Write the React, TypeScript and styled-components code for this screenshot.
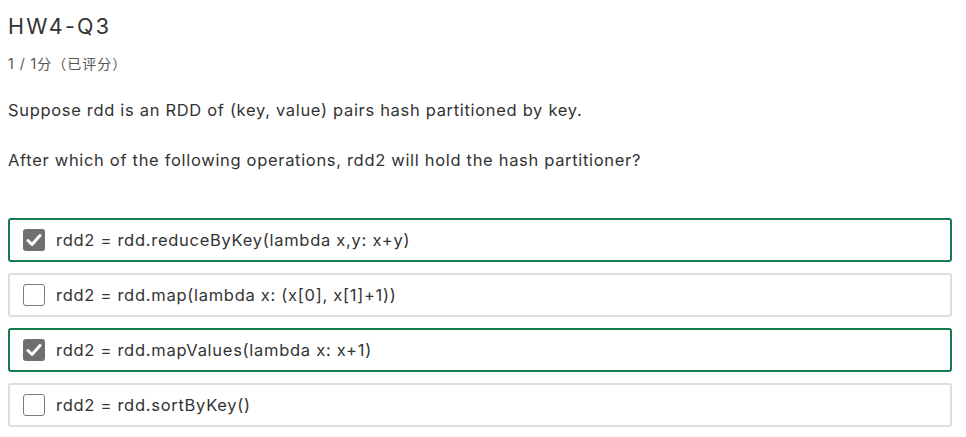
import React from "react";
import styled, { createGlobalStyle } from "styled-components";

const Global = createGlobalStyle`
  html, body { margin: 0; padding: 0; background: #fff; }
  body { font-family: Inter, "Noto Sans CJK SC", sans-serif; color: #333; }
`;

const Page = styled.div`
  padding: 12px 14px 0 8px;
`;

const Title = styled.h1`
  margin: 0;
  font-size: 21.5px;
  font-weight: 400;
  line-height: 28px;
  letter-spacing: 2.2px;
  color: #333;
`;

const Score = styled.div`
  margin-top: 15px;
  font-size: 14px;
  line-height: 18px;
  letter-spacing: 1px;
  color: #555;
`;

const PromptBlock = styled.div`
  margin-top: 25px;
`;

const Prompt = styled.p`
  margin: 0;
  font-size: 16.5px;
  line-height: 24px;
  letter-spacing: 0.68px;
  color: #333;
  & + & { margin-top: 26px; }
`;

const Options = styled.div`
  margin-top: 46px;
  display: flex;
  flex-direction: column;
  gap: 11px;
`;

const Option = styled.label<{ $checked: boolean }>`
  display: flex;
  align-items: center;
  gap: 11px;
  height: 44px;
  box-sizing: border-box;
  padding: 0 13px;
  border: 2px solid ${(p) => (p.$checked ? "#177a4c" : "#dedede")};
  border-radius: 3px;
  font-size: 16.5px;
  letter-spacing: 0.72px;
  color: #333;
`;

const Box = styled.span<{ $checked: boolean }>`
  width: 22px;
  height: 22px;
  box-sizing: border-box;
  border-radius: 3px;
  flex: none;
  display: flex;
  align-items: center;
  justify-content: center;
  background: ${(p) => (p.$checked ? "#6f6f6f" : "#fff")};
  border: ${(p) => (p.$checked ? "none" : "1px solid #7a7a7a")};
`;

const options = [
  { text: "rdd2 = rdd.reduceByKey(lambda x,y: x+y)", checked: true },
  { text: "rdd2 = rdd.map(lambda x: (x[0], x[1]+1))", checked: false },
  { text: "rdd2 = rdd.mapValues(lambda x: x+1)", checked: true },
  { text: "rdd2 = rdd.sortByKey()", checked: false },
];

export default function App() {
  return (
    <>
      <Global />
      <Page>
        <Title>HW4-Q3</Title>
        <Score>1 / 1分（已评分）</Score>
        <PromptBlock>
          <Prompt>Suppose rdd is an RDD of (key, value) pairs hash partitioned by key.</Prompt>
          <Prompt>After which of the following operations, rdd2 will hold the hash partitioner?</Prompt>
        </PromptBlock>
        <Options>
          {options.map((o) => (
            <Option key={o.text} $checked={o.checked}>
              <Box $checked={o.checked}>
                {o.checked && (
                  <svg width="16" height="14" viewBox="0 0 16 14">
                    <path d="M2 7.5 L6 11.5 L14 2.5" fill="none" stroke="#fff" strokeWidth="3" strokeLinecap="round" strokeLinejoin="round" />
                  </svg>
                )}
              </Box>
              <span>{o.text}</span>
            </Option>
          ))}
        </Options>
      </Page>
    </>
  );
}
